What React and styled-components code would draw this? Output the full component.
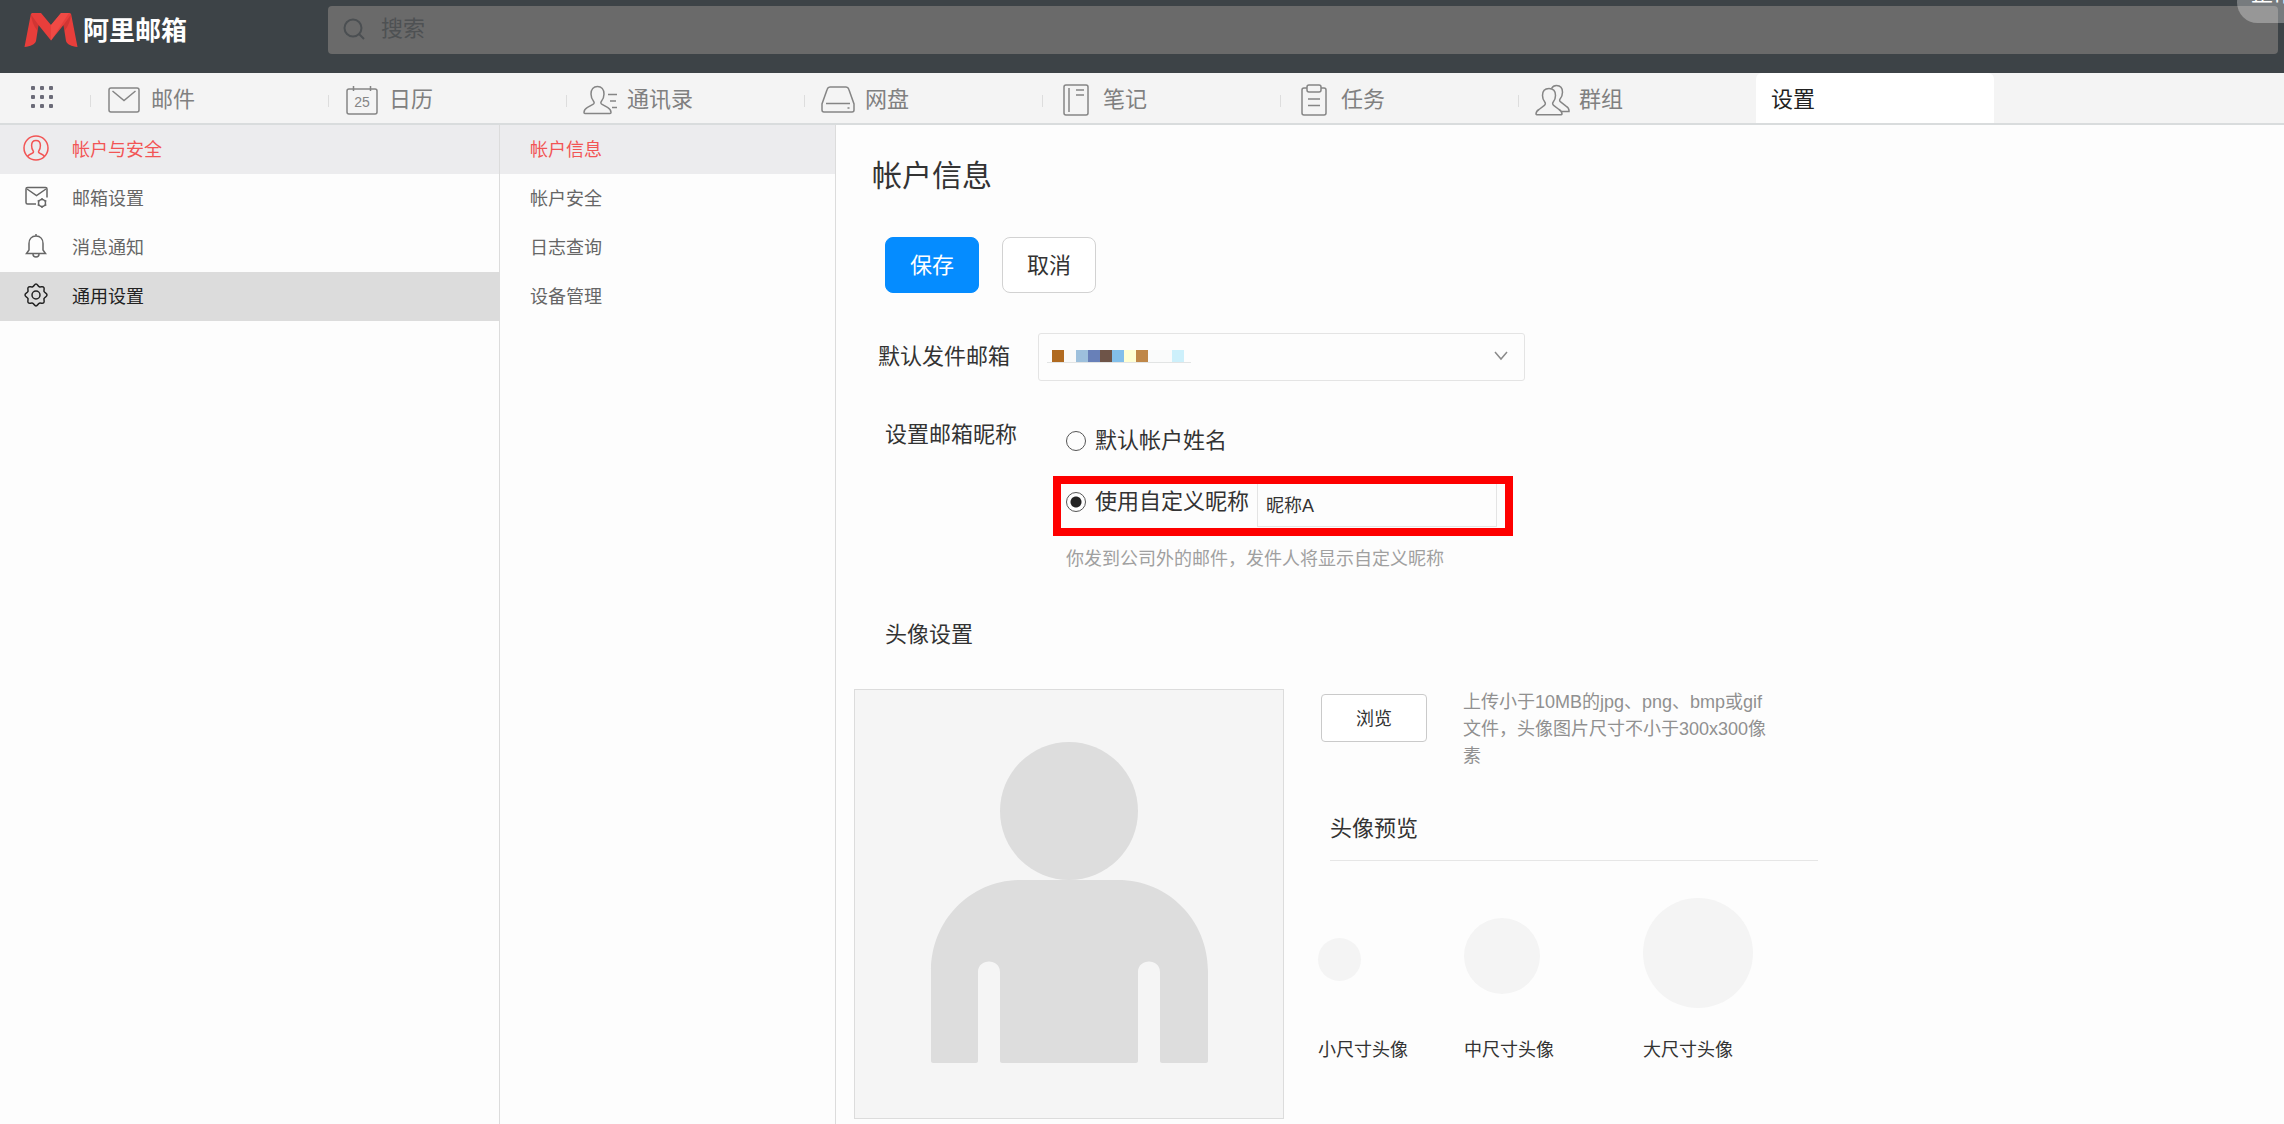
import styled, { createGlobalStyle, css } from 'styled-components'

const tabs = [
  { name: '邮件', icon: 'mail' },
  { name: '日历', icon: 'calendar' },
  { name: '通讯录', icon: 'contacts' },
  { name: '网盘', icon: 'disk' },
  { name: '笔记', icon: 'note' },
  { name: '任务', icon: 'task' },
  { name: '群组', icon: 'group' },
]

const menu = [
  { name: '帐户与安全', icon: 'account', state: 'active' },
  { name: '邮箱设置', icon: 'mailbox' },
  { name: '消息通知', icon: 'bell' },
  { name: '通用设置', icon: 'gear', state: 'hover' },
]

const submenu = [
  { name: '帐户信息', state: 'active' },
  { name: '帐户安全' },
  { name: '日志查询' },
  { name: '设备管理' },
]

const previews = [
  { name: '小尺寸头像', size: 43, top: 40, width: 146 },
  { name: '中尺寸头像', size: 76, top: 20, width: 179 },
  { name: '大尺寸头像', size: 110, top: 0, width: 175 },
]

const maskColors = [
  '#b06a20', '#f9fafa', '#9dc0dc', '#6880b8', '#6e5448', '#82bfea',
  '#ffffd4', '#bf8748', '#fafbfb', '#fafbfb', '#cdf0fb',
]

const tabIcons = {
  mail: (
    <svg width="32" height="32" viewBox="0 0 32 32">
      <rect x="1" y="4" width="30" height="24" rx="2" />
      <path d="M4.500 7 16 16.500 27.500 7" />
    </svg>
  ),
  calendar: (
    <svg width="32" height="32" viewBox="0 0 32 32">
      <rect x="1" y="5" width="30" height="25" rx="2" />
      <path d="M7.500 2v5M24.500 2v5" />
      <text x="16" y="23" textAnchor="middle">25</text>
    </svg>
  ),
  contacts: (
    <svg width="35" height="32" viewBox="0 0 35 32">
      <path d="M14.500 2.500c-4 0-6.500 3-6.500 7.500 0 3 1 5.500 2.700 7.500.9 1.200.4 2.200-.8 2.800l-5.400 3C2.300 24.500 1 26 1 28.500c0 .6.3 1 1 1h25c.7 0 1-.4 1-1 0-2.500-1.300-4-3.500-5.200l-5.400-3c-1.200-.6-1.700-1.600-.8-2.800C20 15.500 21 13 21 10c0-4.500-2.500-7.500-6.500-7.500Z" />
      <path d="M25 10.500h9M27 17h6M29 23.500h5" />
    </svg>
  ),
  disk: (
    <svg width="34" height="32" viewBox="0 0 34 32">
      <path d="M9 3h16c1.500 0 2.400.8 2.800 2.200L33 20v6c0 1.300-.7 2-2 2H3c-1.300 0-2-.7-2-2v-6L6.200 5.200C6.600 3.800 7.500 3 9 3Z" />
      <path d="M5 19.500h24M26.500 24h2" />
    </svg>
  ),
  note: (
    <svg width="26" height="32" viewBox="0 0 26 32">
      <rect x="1" y="1" width="24" height="30" rx="2" />
      <path d="M6 4v24M13 6h8M13 11h8" />
    </svg>
  ),
  task: (
    <svg width="26" height="32" viewBox="0 0 26 32">
      <path d="M6 4H3c-1.300 0-2 .7-2 2v23c0 1.300.7 2 2 2h20c1.300 0 2-.7 2-2V6c0-1.300-.7-2-2-2h-3" />
      <rect x="6" y="1" width="14" height="7" rx="2" />
      <path d="M7 15h12M7 21.500h12" />
    </svg>
  ),
  group: (
    <svg width="35" height="32" viewBox="0 0 35 32">
      <path d="M14 4.500c-4.300 0-6.500 3-6.500 7 0 3 1 5.200 2.400 6.800.8 1 .5 2.300-.5 3L4 25.500c-2 1.200-3 2.300-3 4.500 0 .4.300.7.700.7h24.600c.4 0 .7-.3.7-.7 0-2.200-1-3.300-3-4.500l-5.400-4.200c-1-.7-1.300-2-.5-3 1.400-1.600 2.400-3.800 2.400-6.800 0-4-2.200-7-6.500-7Z" />
      <path d="M16.500 4.500C17.500 2.600 19.500 1.500 21.500 1.500c4 0 6 3 6 6.800 0 3-1 5-2.400 6.600-.8 1-.5 2.300.5 3l5.400 4.200c2 1.200 3 2.300 3 4.500v1h-7.500" />
    </svg>
  ),
}

const menuIcons = {
  account: (
    <svg width="26" height="26" viewBox="0 0 26 26">
      <circle cx="13" cy="13" r="12" />
      <path d="M4.500 21.500c1-1.500 2.500-2.300 4.200-3 1.500-.7 2.300-1.200 1.500-2.600C8.800 14.200 8.600 12.500 8.600 10.500c0-3 1.700-5 4.400-5s4.400 2 4.400 5c0 2-.2 3.700-1.600 5.400-.8 1.400 0 1.900 1.500 2.600 1.700.7 3.200 1.500 4.200 3" />
    </svg>
  ),
  mailbox: (
    <svg width="26" height="26" viewBox="0 0 26 26">
      <path d="M13 20H4.500C3.500 20 3 19.500 3 18.500V5c0-1 .5-1.500 1.500-1.500h18c1 0 1.500.5 1.500 1.500v8.500" />
      <path d="m4 5 9.500 6.500L23 5" />
      <circle cx="19" cy="19" r="3.500" />
      <path d="M19 14v1.500M19 22.500V24M14.700 16.500l1.300.8M22 20.700l1.300.8M14.700 21.500l1.300-.8M22 17.300l1.300-.8" />
    </svg>
  ),
  bell: (
    <svg width="26" height="26" viewBox="0 0 26 26">
      <path d="M13 3c-4.500 0-7 3.300-7 7.500V17l-2.500 3.500h19L20 17v-6.500C20 6.300 17.500 3 13 3ZM13 3V1M10 21c0 1.700 1.200 3 3 3s3-1.300 3-3" />
    </svg>
  ),
  gear: (
    <svg width="26" height="26" viewBox="0 0 26 26">
      <path d="M13 2c1.600 0 2 2.300 3.300 2.800 1.300.6 3.300-.8 4.400.4 1.200 1.200-.2 3.100.4 4.400.5 1.300 2.900 1.700 2.900 3.400s-2.400 2.100-2.900 3.400c-.6 1.300.8 3.200-.4 4.400-1.100 1.200-3.100-.2-4.400.4-1.300.5-1.700 2.800-3.300 2.800s-2-2.300-3.300-2.800c-1.300-.6-3.300.8-4.400-.4-1.200-1.200.2-3.100-.4-4.400C4.400 15.100 2 14.700 2 13s2.400-2.100 2.900-3.400c.6-1.300-.8-3.200.4-4.400 1.100-1.200 3.100.2 4.400-.4C11 4.300 11.400 2 13 2Z" />
      <circle cx="13" cy="13" r="4" />
    </svg>
  ),
}

function Logo() {
  return (
    <svg width="54" height="36" viewBox="0 0 54 36">
      <path fill="#e83e3b" d="M9 1h8l10 12L37 1h8c1.500 0 2 .5 2.300 2L53.500 35c-6-.8-10.500-2.500-11.500-6l-2.500-16L27 28.500 14.500 13 12 29c-1 3.500-5.500 5.200-11.500 6L6.700 3C7 1.500 7.500 1 9 1Z" />
      <path fill="#b92b2b" d="M7 2.500 14.500 13l-1 6C9.500 14 7.500 8 7 2.500ZM47 2.500 39.500 13l1 6c4-5 6-11 6.500-16.500Z" opacity=".5" />
      <path fill="#f4504a" d="M37 1h8L27 28.500V13Z" opacity=".7" />
    </svg>
  )
}

function Person() {
  return (
    <svg width="428" height="428" viewBox="0 0 428 428" fill="#dddddd">
      <circle cx="214" cy="121" r="69" />
      <path d="M165 190h98c50 0 90 40 90 91v90c0 1-1 2-2 2h-44c-1 0-2-1-2-2v-89c0-14-22-14-22 0v89c0 1-1 2-2 2H147c-1 0-2-1-2-2v-89c0-14-22-14-22 0v89c0 1-1 2-2 2H78c-1 0-2-1-2-2v-90c0-51 40-91 89-91Z" />
    </svg>
  )
}

function App() {
  return (
    <Page>
      <GlobalStyle />
      <Header>
        <Brand href="#">
          <Logo />
          <BrandName>阿里邮箱</BrandName>
        </Brand>
        <Search>
          <svg width="22" height="22" viewBox="0 0 22 22">
            <circle cx="10" cy="10" r="8.500" />
            <path d="m16 16 5 5" />
          </svg>
          <SearchInput type="text" placeholder="搜索" aria-label="搜索" />
        </Search>
        <Status>正常</Status>
      </Header>

      <Tabs>
        <Apps aria-label="应用">
          {Array.from({ length: 9 }, (_, i) => <Dot key={i} />)}
        </Apps>
        {tabs.map((tab) => (
          <Tab key={tab.name} href="#">
            <TabIcon>{tabIcons[tab.icon]}</TabIcon>
            {tab.name}
          </Tab>
        ))}
        <Tab href="#" $active>设置</Tab>
      </Tabs>

      <Body>
        <Menu $width={500}>
          {menu.map((item) => (
            <MenuItem key={item.name} href="#" $state={item.state}>
              {menuIcons[item.icon]}
              {item.name}
            </MenuItem>
          ))}
        </Menu>
        <Menu $width={336}>
          {submenu.map((item) => (
            <SubItem key={item.name} href="#" $state={item.state}>{item.name}</SubItem>
          ))}
        </Menu>

        <Content>
          <Title>帐户信息</Title>
          <Actions>
            <Button $primary>保存</Button>
            <Button>取消</Button>
          </Actions>

          <SenderRow>
            <Label htmlFor="sender">默认发件邮箱</Label>
            <SelectBox>
              <Select id="sender" />
              <Mask>
                {maskColors.map((color, i) => <MaskCell key={i} $color={color} />)}
              </Mask>
              <Chevron width="14" height="10" viewBox="0 0 14 10">
                <path d="m1 1 6 7 6-7" />
              </Chevron>
            </SelectBox>
          </SenderRow>

          <NickRow>
            <NickLabel>设置邮箱昵称</NickLabel>
            <Options>
              <Option $indent>
                <Radio type="radio" name="nick" />
                默认帐户姓名
              </Option>
              <Highlight>
                <Option>
                  <Radio type="radio" name="nick" defaultChecked />
                  使用自定义昵称
                </Option>
                <NickInput type="text" defaultValue="昵称A" aria-label="昵称" />
              </Highlight>
              <Hint>你发到公司外的邮件，发件人将显示自定义昵称</Hint>
            </Options>
          </NickRow>

          <SectionTitle>头像设置</SectionTitle>
          <AvatarRow>
            <AvatarBox>
              <Person />
            </AvatarBox>
            <AvatarSide>
              <Upload>
                <Browse>浏览</Browse>
                <Tip>上传小于10MB的jpg、png、bmp或gif文件，头像图片尺寸不小于300x300像素</Tip>
              </Upload>
              <PreviewTitle>头像预览</PreviewTitle>
              <Previews>
                {previews.map((p) => (
                  <Preview key={p.name} $width={p.width}>
                    <CircleArea $top={p.top}>
                      <Circle $size={p.size} />
                    </CircleArea>
                    {p.name}
                  </Preview>
                ))}
              </Previews>
            </AvatarSide>
          </AvatarRow>
        </Content>
      </Body>
    </Page>
  )
}

export default App

const GlobalStyle = createGlobalStyle`
  * {
    box-sizing: border-box;
  }
  body {
    margin: 0;
    background: #fdfdfd;
  }
  body, button, input, select {
    font-family: "Liberation Sans", "Noto Sans CJK SC", sans-serif;
  }
  a {
    text-decoration: none;
  }
  svg {
    flex: none;
  }
`;

const Page = styled.div`
  display: flex;
  flex-direction: column;
  min-height: 100vh;
  color: #333;
`;

const Header = styled.header`
  position: relative;
  display: flex;
  align-items: flex-start;
  height: 73px;
  padding: 6px 6px 0 24px;
  background: #3d4347;
  overflow: hidden;
`;

const Brand = styled.a`
  display: flex;
  align-items: center;
  gap: 5px;
  width: 304px;
  height: 48px;
  color: #fff;
`;

const BrandName = styled.span`
  padding-bottom: 4px;
  font-size: 26px;
  font-weight: 700;
`;

const Search = styled.div`
  display: flex;
  flex: 1;
  align-items: center;
  gap: 16px;
  height: 48px;
  padding: 0 15px 2px;
  border-radius: 4px;
  background: #6a6a6a;

  svg {
    fill: none;
    stroke: #4b4f52;
    stroke-width: 2;
  }
`;

const SearchInput = styled.input`
  flex: 1;
  height: 30px;
  padding: 0;
  border: 0;
  outline: 0;
  background: none;
  font-size: 22px;

  &::placeholder {
    color: #4e5153;
    opacity: 1;
  }
`;

/* hangs over the corner of the window */
const Status = styled.div`
  position: absolute;
  top: -18px;
  left: calc(100% - 47px);
  width: 90px;
  height: 41px;
  padding-left: 14px;
  border-radius: 26px;
  background: rgba(255, 255, 255, 0.3);
  font-size: 22px;
  line-height: 24px;
  white-space: nowrap;
  color: #fff;
`;

const Tabs = styled.nav`
  display: flex;
  height: 52px;
  border-bottom: 2px solid #d9dcdd;
  background: #f4f4f4;
`;

const Apps = styled.button`
  display: grid;
  grid-template-columns: repeat(3, 4px);
  grid-auto-rows: 4px;
  align-content: center;
  gap: 5px;
  width: 90px;
  padding: 0 0 3px 31px;
  border: 0;
  background: none;
`;

const Dot = styled.span`
  border-radius: 1px;
  background: #6b6b78;
`;

const Tab = styled.a`
  display: flex;
  align-items: center;
  gap: 9px;
  width: 238px;
  padding: 0 0 2px 16px;
  background: linear-gradient(#dddddd, #dddddd) 0 22px / 1px 12px no-repeat;
  font-size: 22px;
  color: #808080;

  ${(p) => p.$active && css`
    padding-left: 15px;
    border-radius: 6px 6px 0 0;
    background: #fff;
    color: #222;
  `}
`;

const TabIcon = styled.span`
  display: flex;
  justify-content: center;
  width: 36px;
  padding-top: 6px;

  svg {
    fill: none;
    stroke: #858585;
    stroke-width: 1.500;
  }

  text {
    fill: #858585;
    stroke: none;
    font-size: 14px;
  }
`;

const Body = styled.div`
  display: flex;
  flex: 1;
`;

const Menu = styled.nav`
  flex: none;
  width: ${(p) => p.$width}px;
  border-right: 1px solid #dcdcdc;
`;

const itemColors = {
  active: css`
    background: #ececee;
    color: #f25555;
  `,
  hover: css`
    background: #dcdcdc;
    color: #222;
  `,
}

const SubItem = styled.a`
  display: flex;
  align-items: center;
  height: 49px;
  padding: 0 0 4px 30px;
  font-size: 18px;
  color: #666;
  ${(p) => itemColors[p.$state]}
`;

const MenuItem = styled(SubItem)`
  gap: 23px;
  padding-left: 23px;

  svg {
    fill: none;
    stroke: currentColor;
    stroke-width: 1.500;
  }
`;

const Content = styled.main`
  flex: 1;
  padding: 27px 18px 4px;
`;

const Title = styled.h1`
  margin: 0 0 37px;
  padding-left: 18px;
  font-size: 30px;
  line-height: 48px;
  font-weight: 400;
`;

const Actions = styled.div`
  display: flex;
  gap: 23px;
  padding-left: 31px;
`;

const Button = styled.button`
  width: 94px;
  height: 56px;
  padding: 0 0 5px;
  border: 1px solid #d2d2d2;
  border-radius: 8px;
  background: #fff;
  font-size: 22px;
  color: #333;

  ${(p) => p.$primary && css`
    border-color: #058cff;
    background: #058cff;
    color: #fff;
  `}
`;

const SenderRow = styled.div`
  display: flex;
  align-items: center;
  margin-top: 40px;
  padding-left: 24px;
`;

const Label = styled.label`
  flex: none;
  width: 160px;
  font-size: 22px;
  line-height: 32px;
`;

const SelectBox = styled.div`
  position: relative;
  width: 487px;
`;

const Select = styled.select`
  display: block;
  appearance: none;
  width: 100%;
  height: 48px;
  border: 1px solid #e4e4e4;
  border-radius: 3px;
  background: none;
`;

/* pixelated address over the select */
const Mask = styled.div`
  position: absolute;
  top: 17px;
  left: 9px;
  display: flex;
  width: 144px;
  padding-left: 5px;
  border-bottom: 1px solid #e2e4e4;
  pointer-events: none;
`;

const MaskCell = styled.span`
  width: 12px;
  height: 12px;
  background: ${(p) => p.$color};
`;

const Chevron = styled.svg`
  position: absolute;
  top: 18px;
  right: 17px;
  fill: none;
  stroke: #8a8a8a;
  stroke-width: 1.500;
  pointer-events: none;
`;

const NickRow = styled.div`
  display: flex;
  margin-top: 38px;
  padding-left: 31px;
`;

const NickLabel = styled.div`
  flex: none;
  width: 168px;
  font-size: 22px;
  line-height: 32px;
`;

const Options = styled.div`
  display: flex;
  flex-direction: column;
  padding-top: 4px;
`;

const Option = styled.label`
  display: flex;
  align-items: center;
  gap: 9px;
  padding-left: ${(p) => (p.$indent ? 13 : 0)}px;
  font-size: 22px;
  line-height: 36px;
`;

const Radio = styled.input`
  appearance: none;
  width: 20px;
  height: 20px;
  margin: 0;
  border: 1px solid #555;
  border-radius: 50%;

  &:checked {
    background: radial-gradient(circle, #222 5px, transparent 6px);
  }
`;

const Highlight = styled.div`
  display: flex;
  align-items: flex-start;
  justify-content: space-between;
  width: 460px;
  height: 60px;
  margin: 17px 0 9px;
  padding: 0 8px 0 5px;
  border: 8px solid #fe0000;
`;

const NickInput = styled.input`
  width: 240px;
  height: 43px;
  padding: 0 8px 3px;
  border: 1px solid #e4e4e4;
  border-top: 0;
  background: none;
  font-size: 18px;
  color: #333;
`;

const Hint = styled.div`
  padding-left: 13px;
  font-size: 18px;
  line-height: 28px;
  color: #a0a0a0;
`;

const SectionTitle = styled.h2`
  margin: 46px 0 38px;
  padding-left: 31px;
  font-size: 22px;
  line-height: 32px;
  font-weight: 400;
`;

const AvatarRow = styled.div`
  display: flex;
  gap: 34px;
`;

const AvatarBox = styled.div`
  flex: none;
  width: 430px;
  height: 430px;
  border: 1px solid #dcdcdc;
  background: #f5f5f5;
`;

const AvatarSide = styled.div`
  width: 500px;
`;

const Upload = styled.div`
  display: flex;
  align-items: flex-start;
  gap: 36px;
  padding-left: 3px;
`;

const Browse = styled.button`
  flex: none;
  width: 106px;
  height: 48px;
  margin-top: 5px;
  padding: 0 0 2px;
  border: 1px solid #cacaca;
  border-radius: 4px;
  background: #fff;
  font-size: 18px;
  color: #333;
`;

const Tip = styled.p`
  width: 312px;
  margin: 0;
  font-size: 18px;
  line-height: 27px;
  color: #909090;
`;

const PreviewTitle = styled.h2`
  margin: 43px 0 0 12px;
  padding: 0 0 15px;
  border-bottom: 1px solid #e6e6e6;
  font-size: 22px;
  line-height: 32px;
  font-weight: 400;
`;

const Previews = styled.div`
  display: flex;
  padding-top: 37px;
`;

const Preview = styled.div`
  width: ${(p) => p.$width}px;
  font-size: 18px;
  line-height: 28px;
`;

const CircleArea = styled.div`
  height: 138px;
  padding-top: ${(p) => p.$top}px;
`;

const Circle = styled.div`
  width: ${(p) => p.$size}px;
  height: ${(p) => p.$size}px;
  border-radius: 50%;
  background: #f4f4f4;
`;
